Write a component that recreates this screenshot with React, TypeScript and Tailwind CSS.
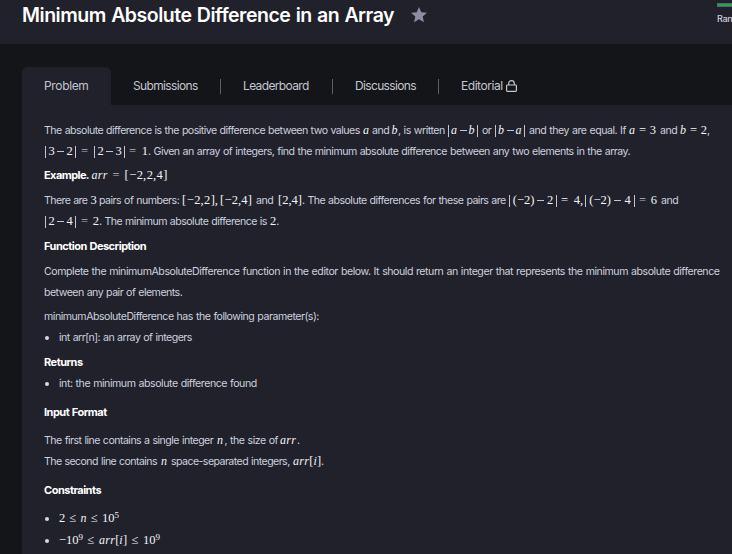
import React from "react";

type Props = { className?: string; children?: React.ReactNode };

/** One line of the statement. */
function Line({ className = "", children }: Props) {
  return <div className={`flex h-[21px] items-baseline whitespace-nowrap leading-[21px] ${className}`}>{children}</div>;
}

/** A run of prose. */
function T({ className = "", children }: Props) {
  return <span className={`shrink-0 ${className}`}>{children}</span>;
}

/** A formula whose symbols are spread over its width. */
function M({ className = "", children }: Props) {
  return (
    <span className={`flex shrink-0 items-baseline justify-between font-['Liberation_Serif',serif] text-[12.5px] tracking-normal text-[#f4f4f6] [word-spacing:0] ${className}`}>
      {children}
    </span>
  );
}

const I = ({ children }: Props) => <i className="text-[12px] tracking-[0.3px]">{children}</i>;
const Eq = () => <span className="text-[#b5b5bd]">=</span>;
/** Tall absolute-value bar. */
const Bar = () => <span className="relative top-[3px] h-3 w-px bg-[#c4c4ca]" />;
const Minus = () => <span className="relative -top-[3px] h-px w-[7px] bg-[#c4c4ca]" />;

function Heading({ className = "", children }: Props) {
  return <Line className={`font-bold text-[11px] tracking-[-0.5px] text-white ${className}`}>{children}</Line>;
}

function Bullet() {
  return <span className="mr-[10px] ml-px h-1 w-1 shrink-0 self-center rounded-full bg-[#d5d7e2]" />;
}

function Divider() {
  return <span className="h-[15px] w-px bg-[#5d5e68]" />;
}

export default function App() {
  return (
    <div className="flex h-[554px] w-[732px] flex-col overflow-hidden bg-[#141518] font-['Inter',sans-serif] text-[#cdd0de]">
      <header className="flex h-11 shrink-0 items-start bg-[#21212b] pl-[22px]">
        <h1 className="w-[389px] pt-[1px] text-[19.5px] leading-[28px] font-semibold tracking-[-0.47px] [word-spacing:0.8px] whitespace-nowrap text-white">
          Minimum Absolute Difference in an Array
        </h1>
        <svg className="mt-[7px] h-4 w-4" viewBox="0 0 16 16" fill="#8c8ca6">
          <path d="M8 0l2.3 5.2 5.7.6-4.3 3.8 1.2 5.6L8 12.300l-4.900 2.900 1.200-5.600L0 5.800l5.700-.600z" />
        </svg>
        <div className="ml-[290px] w-[15px] overflow-hidden pt-[3px]">
          <div className="h-1 w-10 border border-[#62636f] bg-[#1ba94c]" />
          <div className="mt-[6px] text-[9px] leading-3 font-medium tracking-[-0.3px]">Rank</div>
        </div>
      </header>

      <nav className="mt-[23px] flex h-[38px] shrink-0 items-center pl-[22px] text-[12px] tracking-[-0.65px] whitespace-nowrap text-[#c3c5d0]">
        <div className="flex h-full w-[89px] items-center rounded-t-[6px] bg-[#21212b] pl-[22px] tracking-[-0.35px]">Problem</div>
        <div className="w-[109px] pl-[22px]">Submissions</div>
        <Divider />
        <div className="w-[111px] pl-[22px]">Leaderboard</div>
        <Divider />
        <div className="w-[105px] pl-[22px]">Discussions</div>
        <Divider />
        <div className="w-[67px] pl-[22px] tracking-[-0.45px]">Editorial</div>
        <svg className="h-3 w-[11px]" viewBox="0 0 11 12" fill="none" stroke="#c3c5d0" strokeWidth="1.2">
          <rect x=".6" y="5" width="9.800" height="6.300" rx=".8" />
          <path d="M2.700 5V3.400a2.800 2.800 0 0 1 5.600 0V5" />
        </svg>
      </nav>

      <main className="ml-[22px] grow bg-[#21212b] pt-[15px] pl-[22px] text-[10.6px] tracking-[-0.48px] [word-spacing:0.5px]">
        <Line>
          <T className="w-[319px] tracking-[-0.53px]">The absolute difference is the positive difference between two values</T>
          <M className="w-[9px]"><I>a</I></M>
          <T className="w-[19.500px]">and</T>
          <M className="w-[6.500px]"><I>b</I></M>
          <T className="w-[50px]">, is written</T>
          <M className="mr-[4px] w-[30px]"><Bar /><I>a</I><Minus /><I>b</I><Bar /></M>
          <T className="w-[13px]">or</T>
          <M className="mr-[4px] w-[30px]"><Bar /><I>b</I><Minus /><I>a</I><Bar /></M>
          <T className="w-[100px]">and they are equal. If</T>
          <M className="mr-[4px] w-[27px]"><I>a</I><span>=</span><span>3</span></M>
          <T className="w-[20px]">and</T>
          <M className="w-[27px]"><I>b</I><span>=</span><span>2</span></M>
          <T>,</T>
        </Line>
        <Line>
          <M className="mr-[5px] ml-px w-[31px]"><Bar /><span>3</span><Minus /><span>2</span><Bar /></M>
          <M className="mr-[3px] w-[9px]"><Eq /></M>
          <M className="mr-[4px] ml-px w-[31px]"><Bar /><span>2</span><Minus /><span>3</span><Bar /></M>
          <M className="w-[19px]"><Eq /><span>1</span></M>
          <T className="tracking-[-0.51px]">. Given an array of integers, find the minimum absolute difference between any two elements in the array.</T>
        </Line>
        <Line className="mt-[3px]">
          <T className="w-[47.500px] text-[11px] font-bold tracking-[-0.58px] text-white">Example.</T>
          <M className="mr-[4px] w-[17px]"><I>arr</I></M>
          <M className="mr-[3px] w-[9px]"><Eq /></M>
          <M className="w-[43px]"><span>[</span><span>−</span><span>2,</span><span>2,</span><span>4</span><span>]</span></M>
        </Line>
        <Line className="mt-[4px]">
          <T className="w-[46.500px] tracking-[-0.6px]">There are</T>
          <M className="w-[8.500px]"><span>3</span></M>
          <T className="w-[83px] tracking-[-0.52px]">pairs of numbers:</T>
          <M className="mr-[2px] w-[36px]"><span>[</span><span>−</span><span>2,</span><span>2</span><span>],</span></M>
          <M className="mr-[4px] w-[32px]"><span>[</span><span>−</span><span>2,</span><span>4</span><span>]</span></M>
          <T className="w-[22px]">and</T>
          <M className="w-[24px]"><span>[</span><span>2,</span><span>4</span><span>]</span></M>
          <T className="w-[207px] tracking-[-0.53px]">. The absolute differences for these pairs are</T>
          <M className="mr-[4px] w-[48px]"><Bar /><span>(−2)</span><Minus /><span>2</span><Bar /></M>
          <M className="w-[22px]"><span>=</span><span>4,</span></M>
          <M className="mr-[4px] ml-[2px] w-[50px]"><Bar /><span>(−2)</span><Minus /><span>4</span><Bar /></M>
          <M className="mr-[4px] w-[18px]"><Eq /><span>6</span></M>
          <T>and</T>
        </Line>
        <Line>
          <M className="mr-[5px] ml-px w-[31px]"><Bar /><span>2</span><Minus /><span>4</span><Bar /></M>
          <M className="w-[18px]"><Eq /><span>2</span></M>
          <T className="w-[171px] tracking-[-0.53px]">. The minimum absolute difference is</T>
          <M><span>2</span></M>
          <T>.</T>
        </Line>
        <Heading className="mt-[4px]">Function Description</Heading>
        <Line className="mt-[4px]">
          <T className="tracking-[-0.45px]">Complete the minimumAbsoluteDifference function in the editor below. It should return an integer that represents the minimum absolute difference</T>
        </Line>
        <Line><T className="tracking-[-0.52px]">between any pair of elements.</T></Line>
        <Line className="mt-[3px]"><T>minimumAbsoluteDifference has the following parameter(s):</T></Line>
        <Line><Bullet /><T className="tracking-[-0.53px]">int arr[n]: an array of integers</T></Line>
        <Heading className="mt-[4px]">Returns</Heading>
        <Line><Bullet /><T className="tracking-[-0.45px]">int: the minimum absolute difference found</T></Line>
        <Heading className="mt-[8px]">Input Format</Heading>
        <Line className="mt-[7px]">
          <T className="w-[173px] tracking-[-0.53px]">The first line contains a single integer</T>
          <M className="w-[7.500px]"><I>n</I></M>
          <T className="w-[55.500px]">, the size of</T>
          <M className="w-[17px]"><I>arr</I></M>
          <T>.</T>
        </Line>
        <Line>
          <T className="w-[117px] tracking-[-0.57px]">The second line contains</T>
          <M className="w-[10px]"><I>n</I></M>
          <T className="w-[122px] tracking-[-0.56px]">space-separated integers,</T>
          <M className="w-[28px]"><I>arr</I><span>[</span><I>i</I><span>]</span></M>
          <T>.</T>
        </Line>
        <Heading className="mt-[8px]">Constraints</Heading>
        <Line className="mt-[7px]">
          <Bullet />
          <M className="w-[60px]">
            <span>2</span><span>≤</span><I>n</I><span>≤</span>
            <span>10<sup className="-top-[4px] text-[9px] leading-none">5</sup></span>
          </M>
        </Line>
        <Line className="mt-px">
          <Bullet />
          <M className="w-[101px]">
            <span>−10<sup className="-top-[4px] text-[9px] leading-none">9</sup></span><span>≤</span>
            <span><I>arr</I>[<I>i</I>]</span><span>≤</span>
            <span>10<sup className="-top-[4px] text-[9px] leading-none">9</sup></span>
          </M>
        </Line>
      </main>
    </div>
  );
}
